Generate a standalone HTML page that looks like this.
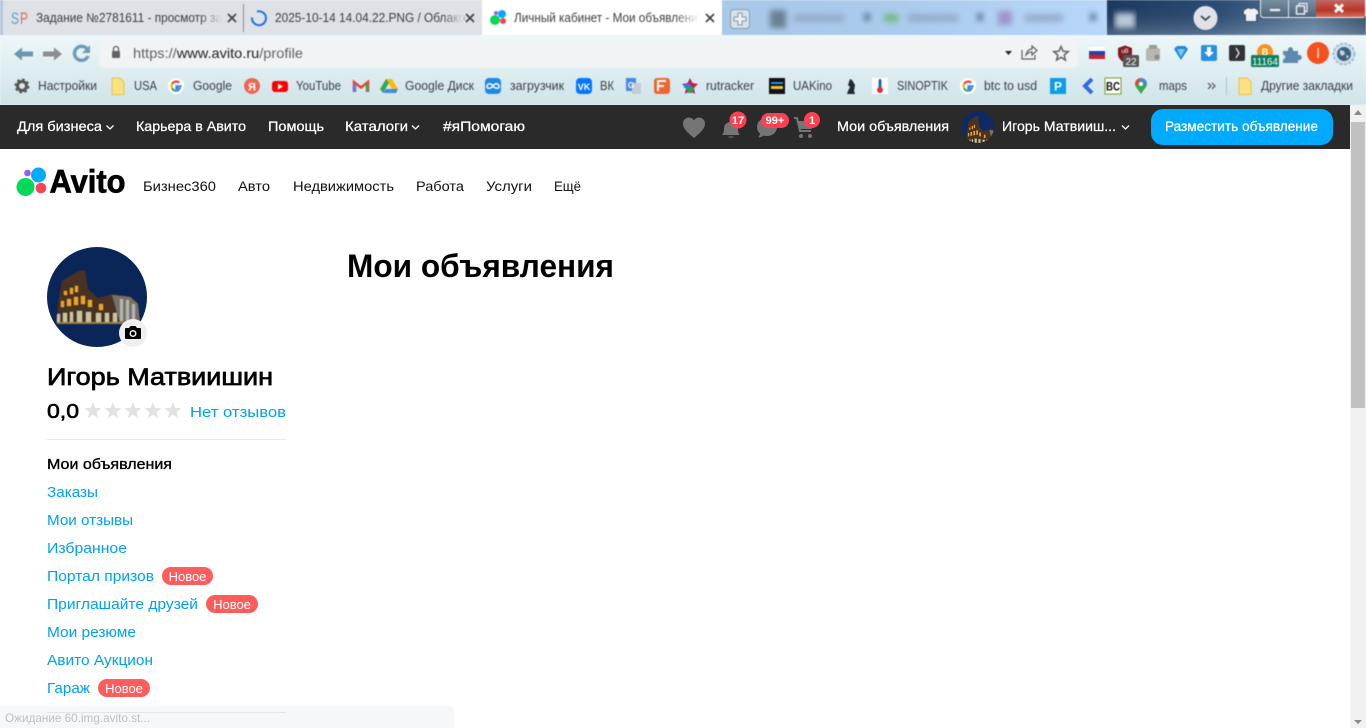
<!DOCTYPE html>
<html lang="ru">
<head>
<meta charset="utf-8">
<title>Личный кабинет - Мои объявления</title>
<style>
html,body{margin:0;padding:0;width:1366px;height:728px;overflow:hidden;background:#fff}
svg{display:block;position:absolute;left:0;top:0}
text{font-family:"Liberation Sans",sans-serif}
.c{fill:#3c4043;font-size:12.5px}
.t{fill:#3c4043;font-size:12.5px}
.w{fill:#fff;font-size:14px;stroke:#fff;stroke-width:.25px}
.n{fill:#111;font-size:14px}
.l{fill:#00a0f5;font-size:15px}
.b{fill:#fff;font-size:13px;text-anchor:middle}
.nb{fill:#fff;font-size:11px;font-weight:bold;text-anchor:middle}
.chrome{filter:blur(.42px)}
</style>
</head>
<body>
<svg width="1366" height="728" viewBox="0 0 1366 728" xmlns="http://www.w3.org/2000/svg">
<defs>
<linearGradient id="tb" x1="0" y1="0" x2="0" y2="1"><stop offset="0" stop-color="#eef7f9"/><stop offset="1" stop-color="#cfe4e9"/></linearGradient>
<linearGradient id="bl" x1="0" y1="0" x2="1" y2="0"><stop offset="0" stop-color="#a9c8e8"/><stop offset=".45" stop-color="#abcbed"/><stop offset="1" stop-color="#b8d7fa"/></linearGradient>
<linearGradient id="dk" x1="0" y1="0" x2="1" y2="0"><stop offset="0" stop-color="#1c3a62"/><stop offset=".45" stop-color="#2d4f78"/><stop offset=".8" stop-color="#5f7f9f"/><stop offset="1" stop-color="#32506f"/></linearGradient>
<linearGradient id="dk2" x1="0" y1="0" x2="0" y2="1"><stop offset="0" stop-color="#000" stop-opacity="0"/><stop offset="1" stop-color="#dfe9ef" stop-opacity=".25"/></linearGradient>
<linearGradient id="fg" x1="0" y1="0" x2="1" y2="0"><stop offset="0" stop-color="#dee1e6" stop-opacity="0"/><stop offset="1" stop-color="#dee1e6"/></linearGradient>
<linearGradient id="fw" x1="0" y1="0" x2="1" y2="0"><stop offset="0" stop-color="#fff" stop-opacity="0"/><stop offset="1" stop-color="#fff"/></linearGradient>
<linearGradient id="rd" x1="0" y1="0" x2="0" y2="1"><stop offset="0" stop-color="#c9645a"/><stop offset=".6" stop-color="#b8352a"/><stop offset="1" stop-color="#d0705f"/></linearGradient>
<linearGradient id="gy" x1="0" y1="0" x2="0" y2="1"><stop offset="0" stop-color="#7f95a8"/><stop offset="1" stop-color="#4d6478"/></linearGradient>
<filter id="bb" x="-10%" y="-100%" width="120%" height="300%"><feGaussianBlur stdDeviation="3"/></filter>
<filter id="sb" x="-5%" y="-5%" width="110%" height="110%"><feGaussianBlur stdDeviation=".5"/></filter>
<g id="colo" filter="url(#sb)">
<path d="M56 323L59 298L62 281L78 271L85 270L88 289L98 298L112 294L130 296L138 303L140 323Z" fill="#4a3020"/>
<path d="M112 295L130 297L138 304L140 323L120 323Z" fill="#77706a"/>
<path d="M57 322h81v2h-81z" fill="#9a7e3c"/>
<g fill="#e8a52a"><rect x="64" y="291" width="3" height="4"/><rect x="70" y="288" width="3" height="6"/><rect x="75" y="286" width="3" height="6"/><rect x="61" y="301" width="3" height="6"/><rect x="67" y="299" width="4" height="7"/><rect x="74" y="297" width="4" height="8"/><rect x="81" y="296" width="4" height="8"/><rect x="88" y="300" width="4" height="7"/><rect x="99" y="304" width="4" height="6"/></g>
<g fill="#c9c4a0"><rect x="57" y="314" width="3" height="8"/><rect x="63" y="313" width="4" height="9"/><rect x="70" y="312" width="3" height="10"/><rect x="77" y="311" width="5" height="11"/><rect x="86" y="312" width="5" height="10"/><rect x="96" y="313" width="5" height="9"/><rect x="105" y="313" width="4" height="9"/><rect x="113" y="313" width="4" height="9"/></g>
<g fill="#b7b5b0"><rect x="120" y="299" width="3" height="22"/><rect x="126" y="300" width="3" height="21"/><rect x="132" y="304" width="3" height="17"/></g>
</g>
<path id="star" d="M0-9L2.23-3.07 8.56-2.78 3.61 1.17 5.29 7.28 0 3.8-5.29 7.28-3.61 1.17-8.56-2.78-2.23-3.07Z"/>
<g id="gg"><circle r="8" fill="#fff"/><path d="M5.6 0.2H0.4v2.3h3c-.4 1.3-1.6 2.3-3.2 2.3" fill="none" stroke="#4285f4" stroke-width="2.2"/><path d="M.2 4.8A4.6 4.6 0 0 1-3.9 2.2" fill="none" stroke="#34a853" stroke-width="2.2"/><path d="M-3.9 2.2A4.6 4.6 0 0 1-3.9-2" fill="none" stroke="#fbbc05" stroke-width="2.2"/><path d="M-3.9-2A4.6 4.6 0 0 1 3.3-3.3" fill="none" stroke="#ea4335" stroke-width="2.2"/></g>
<g id="fold"><path d="M-6-8h8l4 4v12.5h-12z" fill="#fbe27f" stroke="#e3c45a"/></g>
</defs>

<g class="chrome">
<!-- tab strip -->
<rect x="0" y="0" width="482" height="35" fill="#dee1e6"/>
<rect x="0" y="0" width="3" height="35" fill="#b4c6dc"/>
<rect x="722" y="0" width="386" height="35" fill="url(#bl)"/>
<rect x="1107" y="0" width="259" height="35" fill="url(#dk)"/>
<rect x="1107" y="0" width="259" height="35" fill="url(#dk2)"/>
<rect x="482" y="0" width="240" height="35" fill="#fff"/>
<g filter="url(#bb)" opacity=".85">
<rect x="770" y="10" width="16" height="18" fill="#5f7386"/><rect x="794" y="14" width="50" height="8" fill="#8fa8c6"/>
<rect x="864" y="13" width="6" height="8" fill="#4f6d8c"/>
<rect x="884" y="14" width="14" height="8" fill="#68b56f"/><rect x="908" y="14" width="50" height="8" fill="#8fa8c6"/>
<rect x="977" y="13" width="6" height="8" fill="#4f6d8c"/>
<rect x="998" y="11" width="14" height="14" fill="#9a89c4"/><rect x="1025" y="14" width="38" height="8" fill="#8fa8c6"/>
<rect x="1090" y="13" width="6" height="8" fill="#4f6d8c"/>
</g>
<rect x="722" y="0" width="8" height="35" fill="#a9c8e8" opacity=".5"/>
<rect x="1108" y="0" width="0" height="35" fill="none"/>
<rect x="1115" y="13" width="20" height="15" fill="#b9c8d8" filter="url(#bb)"/>
<text x="11" y="24" fill="#5a9fd4" font-size="17" textLength="8" lengthAdjust="spacingAndGlyphs">S</text><text x="20" y="24" fill="#dd6a5e" font-size="17" textLength="8" lengthAdjust="spacingAndGlyphs">P</text>
<text class="t" x="36" y="22" textLength="186" lengthAdjust="spacingAndGlyphs">Задание №2781611 - просмотр за</text>
<rect x="200" y="8" width="22" height="20" fill="url(#fg)"/>
<path d="M228 14l8 8m0-8l-8 8" stroke="#3c4043" stroke-width="1.6"/>
<rect x="243" y="4" width="1" height="28" fill="#8a8f96"/>
<path d="M257 11.5a7 7 0 1 1-5 6" fill="none" stroke="#1a73e8" stroke-width="2"/>
<text class="t" x="275" y="22" textLength="190" lengthAdjust="spacingAndGlyphs">2025-10-14 14.04.22.PNG / Облако</text>
<rect x="442" y="8" width="22" height="20" fill="url(#fg)"/>
<path d="M466 14l8 8m0-8l-8 8" stroke="#3c4043" stroke-width="1.6"/>
<circle cx="495" cy="20" r="5" fill="#04d85a"/><circle cx="502" cy="14" r="4" fill="#0af"/><circle cx="496" cy="13" r="2" fill="#965eeb"/><circle cx="503" cy="21" r="3" fill="#ff4053"/>
<text class="t" x="514" y="22" textLength="190" lengthAdjust="spacingAndGlyphs">Личный кабинет - Мои объявления</text>
<rect x="675" y="8" width="24" height="20" fill="url(#fw)"/><rect x="699" y="8" width="6" height="20" fill="#fff"/>
<path d="M706 14l8 8m0-8l-8 8" stroke="#3c4043" stroke-width="1.6"/>
<rect x="730.500" y="9.500" width="19" height="19" rx="3" fill="#d6e0ea" stroke="#8d9bab"/>
<path d="M738 13h4v4h4v4h-4v4h-4v-4h-4v-4h4z" fill="#eef2f6" stroke="#8a97a4"/>
<circle cx="1205.500" cy="18" r="12" fill="#dfe3e8"/>
<path d="M1201 16l4.500 4 4.500-4" fill="none" stroke="#3c4043" stroke-width="1.600"/>
<path d="M1244 10l4.500-2.500c1 1.500 4 1.500 5 0L1258 10l1 4-2.500 1v6.500h-11V15l-2.500-1z" fill="#eef1f3" stroke="#33424f" stroke-width=".8"/>
<!-- window controls -->
<rect x="1260.500" y="-3" width="105" height="20.500" rx="3" fill="url(#gy)" stroke="#e4ecf2"/>
<rect x="1316" y="0" width="49" height="17" fill="url(#rd)"/>
<rect x="1288" y="0" width="1" height="17" fill="#dbe6ee"/>
<rect x="1269.500" y="8.500" width="11" height="3" fill="#e7edf2" stroke="#49596a" stroke-width=".5"/>
<rect x="1296.500" y="6" width="8" height="8" fill="none" stroke="#e7edf2" stroke-width="1.500"/>
<path d="M1299 6V3.500h8v8h-2.500" fill="none" stroke="#e7edf2" stroke-width="1.200"/>
<path d="M1335 4.500l8 7.500m0-7.500l-8 7.500" stroke="#f2f5f7" stroke-width="3"/>

<!-- toolbar + bookmarks -->
<rect x="0" y="35" width="1350" height="70" fill="url(#tb)"/>
<rect x="1350" y="35" width="16" height="70" fill="url(#tb)"/>
<rect x="99" y="39" width="979" height="29" rx="6" fill="#f1f3f4"/>
<path d="M14 54l8-6.500v4h11v5H22V60.500z" fill="#6f94ad"/>
<path d="M62 54l-8-6.500v4H43v5h11V60.500z" fill="#8b8f92"/>
<path d="M87 49a7 7 0 1 0 1 7" fill="none" stroke="#6f9ab8" stroke-width="3.400"/><path d="M90 45v8h-8z" fill="#6f9ab8"/>
<rect x="112" y="51" width="8" height="7" rx="1" fill="#5f6368"/><path d="M113.500 51v-2a2.500 2.500 0 0 1 5 0v2" fill="none" stroke="#5f6368" stroke-width="1.300"/>
<text x="133" y="58" font-size="14" fill="#5f6368" textLength="170" lengthAdjust="spacingAndGlyphs">https://<tspan fill="#202124">www.avito.ru</tspan>/profile</text>
<path d="M1005 51h7l-3.500 4z" fill="#222"/>
<path d="M1022 50v9h13v-4" fill="none" stroke="#5f6368" stroke-width="1.200"/><path d="M1026 55c1-4 3-6 6-6v-3l5 4.500-5 4.500v-3c-3 0-4 1-6 3z" fill="none" stroke="#5f6368" stroke-width="1.200"/>
<path d="M1061 46.500l2 4.700 5.200.4-4 3.400 1.200 5-4.400-2.700-4.400 2.700 1.200-5-4-3.400 5.200-.4z" fill="none" stroke="#5f6368" stroke-width="1.500"/>
<rect x="1089" y="47" width="16" height="4" fill="#fff"/><rect x="1089" y="51" width="16" height="4" fill="#2b3f9e"/><rect x="1089" y="55" width="16" height="4" fill="#d0202c"/>
<path d="M1118 48l7-2.500 7 2.500v6c0 4-3 7-7 9-4-2-7-5-7-9z" fill="#7c1d22"/>
<text x="1125" y="53" fill="#fff" font-size="6" text-anchor="middle">uB</text>
<rect x="1123" y="55" width="16" height="12" rx="1.500" fill="#555"/><text x="1131" y="65" fill="#fff" font-size="10" text-anchor="middle">22</text>
<rect x="1146" y="48" width="14" height="13" rx="2" fill="#b6b6b2"/><rect x="1149" y="45" width="8" height="4" fill="#9c9c98"/><circle cx="1157" cy="57" r="2.500" fill="#8a8a86"/>
<path d="M1174 49l3-3h8l3 3-7 11z" fill="#1e88d6"/><path d="M1177 49h8l-4 8z" fill="#7cc6f0"/>
<rect x="1201" y="45" width="16" height="16" rx="2" fill="#2a8fe0"/><path d="M1207 47h4v5h3l-5 5-5-5h3z" fill="#fff"/>
<rect x="1229" y="45" width="16" height="16" rx="2" fill="#2f3337"/><path d="M1236 48l3 5-3 5" fill="none" stroke="#e8e8e8" stroke-width="1.300"/>
<circle cx="1265" cy="52" r="8" fill="#f7931a"/><text x="1265" y="55" fill="#fff" font-size="9" font-weight="bold" text-anchor="middle">B</text>
<rect x="1251" y="55" width="28" height="12" rx="1.500" fill="#0a8060"/><text x="1265" y="65" fill="#fff" font-size="10" text-anchor="middle" textLength="26" lengthAdjust="spacingAndGlyphs">11164</text>
<path d="M1283 51h5c-1-5 6-5 5 0h5v4c5-1 5 6 0 5v3h-15v-4c3 1 3-5 0-4z" fill="#5f88ad"/>
<circle cx="1318" cy="53" r="11" fill="#f4511e"/><rect x="1317.300" y="48" width="1.500" height="10" fill="#ffd5c4"/>
<circle cx="1344" cy="54" r="10.500" fill="#cfe0ec" stroke="#9fc0d8" stroke-width="2" stroke-dasharray="3 1.500"/><circle cx="1344" cy="54" r="7" fill="#3f627f"/><path d="M1340 50l4 1 1 3-3 2-2-2zM1346 55l3 1-2 3z" fill="#c7d6e0"/>

<!-- bookmarks -->
<g fill="#595959"><circle cx="22" cy="86" r="4.500" fill="none" stroke="#555" stroke-width="3"/><circle cx="22" cy="86" r="6.500" fill="none" stroke="#555" stroke-width="2" stroke-dasharray="2.500 2.600"/></g>
<text class="c" x="38" y="90" textLength="59" lengthAdjust="spacingAndGlyphs">Настройки</text>
<use href="#fold" x="118" y="86"/>
<text class="c" x="134" y="90" textLength="23" lengthAdjust="spacingAndGlyphs">USA</text>
<use href="#gg" x="176" y="86"/>
<text class="c" x="193" y="90" textLength="39" lengthAdjust="spacingAndGlyphs">Google</text>
<circle cx="252" cy="86" r="8" fill="#f0654f"/><text x="252" y="90.500" fill="#fff" font-size="11" font-weight="bold" text-anchor="middle">Я</text>
<rect x="272" y="81" width="16" height="11" rx="3" fill="#f00"/><path d="M278 83.500l5 3-5 3z" fill="#fff"/>
<text class="c" x="296" y="90" textLength="45" lengthAdjust="spacingAndGlyphs">YouTube</text>
<path d="M354 92v-10l7 5.500 7-5.500v10" fill="none" stroke="#ea4335" stroke-width="2.500"/><path d="M355 92v-8" stroke="#4285f4" stroke-width="2.500"/><path d="M367 92v-8" stroke="#34a853" stroke-width="2.500"/>
<path d="M386 79h6l6 10h-6z" fill="#fbbc05"/><path d="M386 79l-6 10 3 4 6-10z" fill="#34a853"/><path d="M383 93h13l2-4h-12z" fill="#4285f4"/>
<text class="c" x="405" y="90" textLength="69" lengthAdjust="spacingAndGlyphs">Google Диск</text>
<rect x="485" y="78" width="16" height="16" rx="4" fill="#1e88e5"/><path d="M493 86c-2-3-5-3-6 0s4 3 6 0 5-3 6 0-4 3-6 0z" fill="none" stroke="#fff" stroke-width="1.500"/>
<text class="c" x="510" y="90" textLength="54" lengthAdjust="spacingAndGlyphs">загрузчик</text>
<rect x="576" y="78" width="16" height="16" rx="4" fill="#07f"/><text x="584" y="90" fill="#fff" font-size="9" font-weight="bold" text-anchor="middle">VK</text>
<text class="c" x="600" y="90" textLength="14" lengthAdjust="spacingAndGlyphs">ВК</text>
<rect x="626" y="78" width="10" height="13" fill="#4a86e8"/><rect x="632" y="83" width="9" height="11" fill="#c5cdd4"/><text x="631" y="88" fill="#fff" font-size="8" font-weight="bold" text-anchor="middle">G</text>
<rect x="654" y="78" width="16" height="16" rx="3" fill="#f0652f"/><path d="M658 91V81h8M658 86h6" fill="none" stroke="#fff" stroke-width="2"/>
<path d="M690 78l2.500 5 5.500 1-4 4 1 6-5-3-5 3 1-6-4-4 5.500-1z" fill="#c2185b"/><path d="M690 85l4 3-2 5h-4l-2-5z" fill="#2e9e4f"/><path d="M684 84h6v4h-6z" fill="#1e88e5"/>
<text class="c" x="706" y="90" textLength="48" lengthAdjust="spacingAndGlyphs">rutracker</text>
<rect x="769" y="78" width="16" height="16" fill="#111"/><rect x="771" y="82" width="12" height="2" fill="#2a8fe0"/><rect x="771" y="86" width="12" height="3" fill="#f2c230"/>
<text class="c" x="793" y="90" textLength="39" lengthAdjust="spacingAndGlyphs">UAKino</text>
<path d="M847 94l1-3 2-4-2-2 2-6 2 1 3 5-1 6 1 3z" fill="#1f2a33"/>
<rect x="872" y="78" width="16" height="16" fill="#fff"/><rect x="878.500" y="79" width="3" height="10" rx="1.500" fill="#2566c4"/><circle cx="880" cy="90" r="3" fill="#d9342b"/>
<text class="c" x="897" y="90" textLength="51" lengthAdjust="spacingAndGlyphs">SINOPTIK</text>
<use href="#gg" x="968" y="86"/>
<text class="c" x="984" y="90" textLength="53" lengthAdjust="spacingAndGlyphs">btc to usd</text>
<rect x="1050" y="78" width="16" height="16" fill="#0a9de8"/><text x="1058" y="90.500" fill="#fff" font-size="12" font-weight="bold" text-anchor="middle">P</text>
<path d="M1092 79l-7 7 7 7" fill="none" stroke="#3567e8" stroke-width="4"/>
<rect x="1105" y="78" width="16" height="16" fill="#fff" stroke="#7e9a2a" stroke-width="1"/><text x="1113" y="90.500" fill="#111" font-size="12" font-weight="bold" text-anchor="middle" textLength="14" lengthAdjust="spacingAndGlyphs">BC</text>
<path d="M1141 94c-3-5-6-7-6-10a6 6 0 0 1 12 0c0 3-3 5-6 10z" fill="#34a853"/><path d="M1135 84a6 6 0 0 1 6-6l-4 8z" fill="#ea4335"/><path d="M1147 84a6 6 0 0 0-6-6l-1 4z" fill="#4285f4"/><circle cx="1141" cy="84" r="2" fill="#fff"/>
<text class="c" x="1159" y="90" textLength="28" lengthAdjust="spacingAndGlyphs">maps</text>
<path d="M1208 83l3 3-3 3M1212 83l3 3-3 3" fill="none" stroke="#5f6368" stroke-width="1.300"/>
<rect x="1226" y="77" width="1" height="18" fill="#b4c2c6"/>
<use href="#fold" x="1245" y="86"/>
<text class="c" x="1261" y="90" textLength="92" lengthAdjust="spacingAndGlyphs">Другие закладки</text>
</g>

<!-- site header -->
<rect x="0" y="105" width="1350" height="44" fill="#2a2a2a"/>
<rect x="1350" y="105" width="16" height="623" fill="#f1f1f1"/>
<rect x="1351" y="122" width="14" height="286" fill="#c1c1c1"/>
<path d="M1358 110l-4 5h8z" fill="#8a8a8a"/>
<path d="M1354 720h8l-4 4z" fill="#8a8a8a"/>
<text class="w" x="17" y="131" textLength="85" lengthAdjust="spacingAndGlyphs">Для бизнеса</text>
<path d="M106.500 125.500l3.500 3.500 3.500-3.500" fill="none" stroke="#fff" stroke-width="1.300"/>
<text class="w" x="136" y="131" textLength="110" lengthAdjust="spacingAndGlyphs">Карьера в Авито</text>
<text class="w" x="268" y="131" textLength="56" lengthAdjust="spacingAndGlyphs">Помощь</text>
<text class="w" x="345" y="131" textLength="63" lengthAdjust="spacingAndGlyphs">Каталоги</text>
<path d="M412 125.500l3.500 3.500 3.500-3.500" fill="none" stroke="#fff" stroke-width="1.300"/>
<text class="w" x="443" y="131" textLength="82" lengthAdjust="spacingAndGlyphs">#яПомогаю</text>
<path d="M694 138c-7-6-11-9.500-11-14.500a6 6 0 0 1 11-3.300 6 6 0 0 1 11 3.300c0 5-4 8.500-11 14.500z" fill="#757575"/>
<path d="M731 137.500a3 3 0 0 1-3-1h6a3 3 0 0 1-3 1zM722 135c1.500-1.500 2-3 2-6 0-4 2-7 7-7s7 3 7 7c0 3 .5 4.500 2 6z" fill="#757575"/>
<circle cx="738" cy="120" r="8.500" fill="#ff4053"/><text class="nb" x="738" y="124">17</text>
<path d="M767 118c6 0 10 4 10 9s-4 9-10 9c-1 0-2 0-3-.5-2 1.500-4 2-6 2 1-1 2-3 2-4-2-1.500-3-4-3-6.500 0-5 4-9 10-9z" fill="#757575"/>
<rect x="761" y="113" width="28" height="15" rx="7.500" fill="#ff4053"/><text class="nb" x="775" y="124">99+</text>
<path d="M794 118h3l3 13h11" fill="none" stroke="#757575" stroke-width="2"/><path d="M798 121h16l-2.500 8h-12z" fill="#757575"/><circle cx="801" cy="136" r="2" fill="#757575"/><circle cx="810" cy="136" r="2" fill="#757575"/>
<circle cx="812" cy="120" r="8" fill="#ff4053"/><text class="nb" x="812" y="124">1</text>
<text class="w" x="837" y="131" textLength="112" lengthAdjust="spacingAndGlyphs">Мои объявления</text>
<clipPath id="ha"><circle cx="978" cy="127" r="16"/></clipPath>
<g clip-path="url(#ha)"><rect x="960" y="110" width="36" height="34" fill="#0f2a63"/><use href="#colo" transform="translate(978,127) scale(.42,.55) translate(-85,-290)"/></g>
<text class="w" x="1002" y="131" textLength="114" lengthAdjust="spacingAndGlyphs">Игорь Матвииш...</text>
<path d="M1122 125.500l3.500 3.500 3.500-3.500" fill="none" stroke="#fff" stroke-width="1.300"/>
<rect x="1151" y="109" width="182" height="36" rx="12" fill="#00aaff"/>
<text class="w" x="1165" y="131" textLength="153" lengthAdjust="spacingAndGlyphs">Разместить объявление</text>

<!-- logo + nav -->
<circle cx="25.500" cy="187" r="9" fill="#04d85a"/><circle cx="38.500" cy="175" r="7.500" fill="#0af"/><circle cx="27.500" cy="173" r="3.300" fill="#965eeb"/><circle cx="41" cy="188" r="5.300" fill="#ff4053"/>
<text x="49.500" y="192.500" font-size="32" font-weight="bold" fill="#000" stroke="#000" stroke-width=".7" textLength="76" lengthAdjust="spacingAndGlyphs">Avito</text>
<text class="n" x="143" y="191" textLength="73" lengthAdjust="spacingAndGlyphs">Бизнес360</text>
<text class="n" x="238" y="191" textLength="32" lengthAdjust="spacingAndGlyphs">Авто</text>
<text class="n" x="293" y="191" textLength="101" lengthAdjust="spacingAndGlyphs">Недвижимость</text>
<text class="n" x="416" y="191" textLength="48" lengthAdjust="spacingAndGlyphs">Работа</text>
<text class="n" x="486" y="191" textLength="46" lengthAdjust="spacingAndGlyphs">Услуги</text>
<text class="n" x="554" y="191" textLength="27" lengthAdjust="spacingAndGlyphs">Ещё</text>

<text x="347" y="277" font-size="32" font-weight="bold" fill="#000" textLength="267" lengthAdjust="spacingAndGlyphs">Мои объявления</text>

<!-- profile -->
<circle cx="97" cy="297" r="50" fill="#0a2558"/>
<use href="#colo"/>
<circle cx="133" cy="333" r="14" fill="#efefef"/>
<path d="M126 328h3l1.500-2h5l1.500 2h3a1 1 0 0 1 1 1v9a1 1 0 0 1-1 1h-14a1 1 0 0 1-1-1v-9a1 1 0 0 1 1-1z" fill="#000"/><circle cx="133" cy="333.500" r="3.500" fill="#efefef"/><circle cx="133" cy="333.500" r="2" fill="#000"/>
<text x="47" y="385" font-size="24" fill="#000" stroke="#000" stroke-width=".7" textLength="226" lengthAdjust="spacingAndGlyphs">Игорь Матвиишин</text>
<text x="47" y="418" font-size="20" fill="#000" stroke="#000" stroke-width=".6" textLength="32" lengthAdjust="spacingAndGlyphs">0,0</text>
<g fill="#e2e2e2"><use href="#star" x="93" y="411"/><use href="#star" x="113" y="411"/><use href="#star" x="133" y="411"/><use href="#star" x="153" y="411"/><use href="#star" x="173" y="411"/></g>
<text class="l" x="190" y="417" font-size="16" textLength="96" lengthAdjust="spacingAndGlyphs">Нет отзывов</text>
<rect x="47" y="439" width="239" height="1" fill="#e8e8e8"/>
<text x="47" y="469" font-size="15" fill="#000" stroke="#000" stroke-width=".35" textLength="125" lengthAdjust="spacingAndGlyphs">Мои объявления</text>
<text class="l" x="47" y="497" textLength="51" lengthAdjust="spacingAndGlyphs">Заказы</text>
<text class="l" x="47" y="525" textLength="86" lengthAdjust="spacingAndGlyphs">Мои отзывы</text>
<text class="l" x="47" y="553" textLength="80" lengthAdjust="spacingAndGlyphs">Избранное</text>
<text class="l" x="47" y="581" textLength="107" lengthAdjust="spacingAndGlyphs">Портал призов</text>
<rect x="162" y="567" width="51" height="18" rx="9" fill="#ff5c5c"/><text class="b" x="187.500" y="581">Новое</text>
<text class="l" x="47" y="609" textLength="151" lengthAdjust="spacingAndGlyphs">Приглашайте друзей</text>
<rect x="206" y="595" width="52" height="18" rx="9" fill="#ff5c5c"/><text class="b" x="232" y="609">Новое</text>
<text class="l" x="47" y="637" textLength="89" lengthAdjust="spacingAndGlyphs">Мои резюме</text>
<text class="l" x="47" y="665" textLength="106" lengthAdjust="spacingAndGlyphs">Авито Аукцион</text>
<text class="l" x="47" y="693" textLength="43" lengthAdjust="spacingAndGlyphs">Гараж</text>
<rect x="98" y="679" width="52" height="18" rx="9" fill="#ff5c5c"/><text class="b" x="124" y="693">Новое</text>

<!-- status bubble -->
<path d="M0 706H448a6 6 0 0 1 6 6V728H0Z" fill="#f6f7f9"/>
<rect x="47" y="712" width="239" height="1" fill="#e3e4e6"/>
<text x="5" y="722" font-size="12" fill="#bdbfc2" textLength="145" lengthAdjust="spacingAndGlyphs">Ожидание 60.img.avito.st...</text>
</svg>
</body>
</html>
